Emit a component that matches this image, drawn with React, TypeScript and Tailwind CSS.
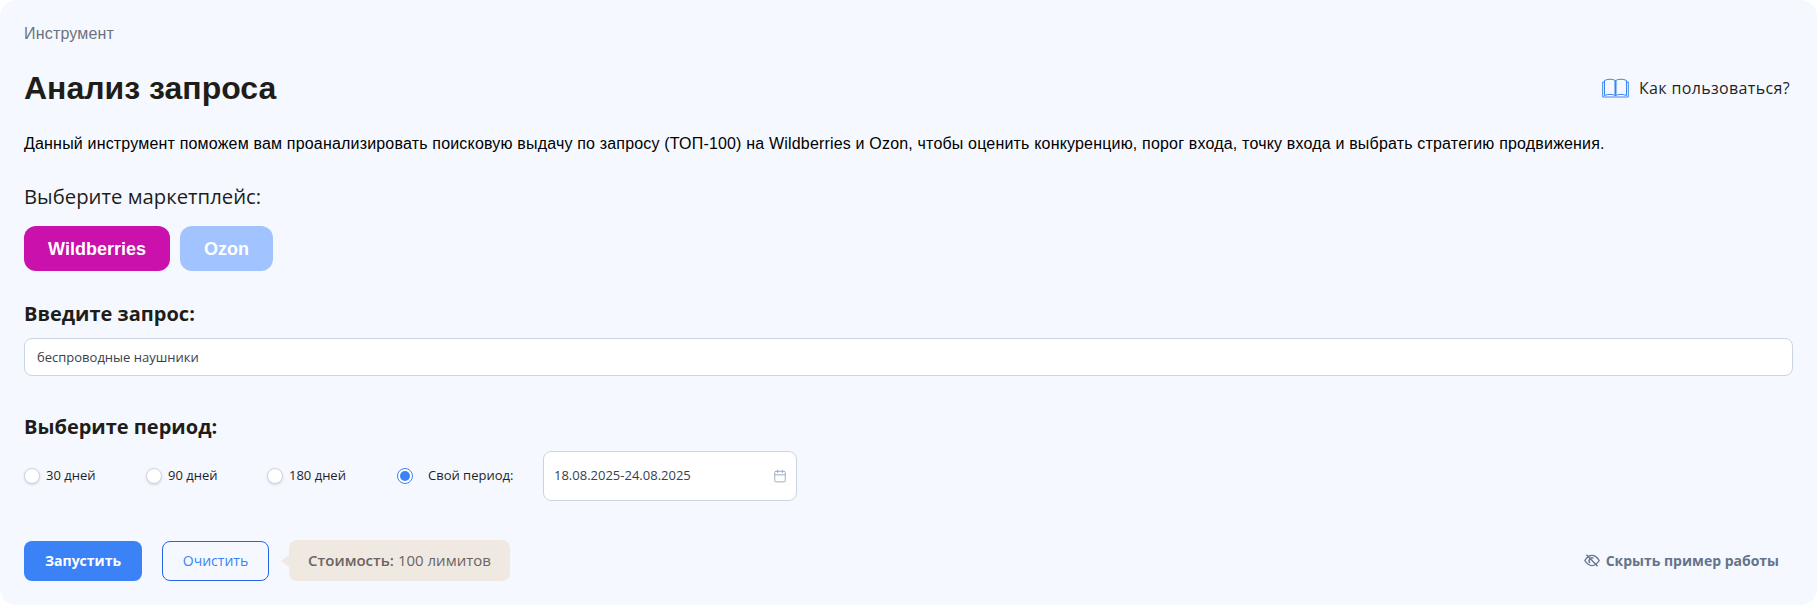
import { Calendar } from "lucide-react";

const sans = "font-['Liberation_Sans',Arial,sans-serif]";
const open = "font-['Open_Sans',sans-serif]";

function Radio({ label, checked, className }: { label: string; checked?: boolean; className: string }) {
  return (
    <label className={`flex items-center ${className}`}>
      {checked ? (
        <span className="flex h-4 w-4 items-center justify-center rounded-full border border-[#3b82f6] bg-white">
          <span className="h-[10px] w-[10px] rounded-full bg-[#3b82f6]" />
        </span>
      ) : (
        <span className="h-4 w-4 rounded-full border border-[#cbd5e1] bg-white shadow-sm" />
      )}
      <span className={`text-[13px] text-[#1f1f1f] ${checked ? "ml-[15px]" : "ml-1.5"}`}>{label}</span>
    </label>
  );
}

function BookIcon() {
  return (
    <svg width="27" height="20" viewBox="0 0 27 20" fill="none" stroke="#3b82f6" strokeWidth="1">
      <path d="M2.5 2.5C6 .8 10 .8 13.5 2.5V17.5C10 16 6 16 2.5 17.5Z" />
      <path d="M24.5 2.5C21 .8 17 .8 13.5 2.5V17.5C17 16 21 16 24.5 17.5Z" />
      <path d="M2.5 4H.7V19H26.3V4H24.5" />
      <path d="M12.5 3V17M14.5 3V17" stroke="#93bbfb" />
    </svg>
  );
}

function HideIcon() {
  return (
    <svg width="16" height="13" viewBox="0 0 16 13" fill="none" stroke="#64748b" strokeWidth="1.4">
      <path d="M.8 6.5C3 3 5.3 1.4 8 1.4S13 3 15.2 6.5C13 10 10.7 11.6 8 11.6S3 10 .8 6.5Z" />
      <path d="M6 9A3 3 0 0 1 9.5 4.2" />
      <path d="M2.5 .8 13.5 12.2" />
    </svg>
  );
}

export default function App() {
  return (
    <div className={`h-[605px] w-[1817px] bg-white ${open}`}>
      <div className="flex h-full flex-col rounded-2xl bg-[#f5f9ff] px-6 pt-[24px]">
        <p className={`${sans} text-base tracking-[0.18px] leading-[20px] text-[#6b7280]`}>Инструмент</p>

        <div className="mt-[22px] flex items-center justify-between">
          <h1 className={`${sans} text-[32px] font-bold leading-[44px] text-[#1f1d1a]`}>Анализ запроса</h1>
          <a className="mr-[3px] flex items-center gap-2.5 text-base font-medium tracking-[0.35px] text-[#1f1f1f]">
            <BookIcon />
            Как пользоваться?
          </a>
        </div>

        <p className={`${sans} mt-[24px] text-base tracking-[0.18px] leading-[20px] text-black`}>
          Данный инструмент поможем вам проанализировать поисковую выдачу по запросу (ТОП-100) на Wildberries и Ozon,
          чтобы оценить конкуренцию, порог входа, точку входа и выбрать стратегию продвижения.
        </p>

        <h2 className="mt-[29px] text-[20.3px] font-medium leading-[26px] text-[#1f1d1a]">Выберите маркетплейс:</h2>
        <div className={`${sans} mt-[17px] flex gap-[10px]`}>
          <button className="h-[45px] w-[146px] rounded-xl bg-[#cb11ab] text-lg font-bold text-white">Wildberries</button>
          <button className="h-[45px] w-[93px] rounded-xl bg-[#a1c3ff] text-lg font-bold text-white">Ozon</button>
        </div>

        <h2 className="mt-[30px] text-[20px] font-bold leading-[26px] text-[#1f1d1a]">Введите запрос:</h2>
        <input
          readOnly
          value="беспроводные наушники"
          className="mt-[11px] h-[38px] w-full rounded-lg border border-[#cbd5e1] bg-white px-[12px] text-[13px] text-[#374151] outline-none"
        />

        <h2 className="mt-[38px] text-[20px] font-bold leading-[26px] text-[#1f1d1a]">Выберите период:</h2>
        <div className="mt-[11px] flex items-center">
          <Radio label="30 дней" className="w-[122px]" />
          <Radio label="90 дней" className="w-[121px]" />
          <Radio label="180 дней" className="w-[130px]" />
          <Radio label="Свой период:" checked className="w-[146px]" />
          <div className="flex h-[50px] w-[254px] items-center justify-between rounded-lg border border-[#cbd5e1] bg-white pl-[10px] pr-[9px]">
            <span className="text-[13px] text-[#374151]">18.08.2025-24.08.2025</span>
            <Calendar className="h-[14px] w-[14px] text-[#94a3b8]" strokeWidth={1.5} />
          </div>
        </div>

        <div className="mt-[39px] flex items-center">
          <button className="h-10 w-[118px] rounded-lg bg-[#3b82f6] text-sm font-bold text-white">Запустить</button>
          <button className="ml-5 h-10 w-[107px] rounded-lg border border-[#2563eb] text-sm text-[#3b82f6]">Очистить</button>
          <div className="relative ml-5 flex h-[41px] w-[221px] items-center justify-center rounded-lg bg-[#f0e9e2] text-[15px] text-[#6b6460]">
            <span className="absolute -left-2 top-1/2 h-0 w-0 -translate-y-1/2 border-y-[6px] border-r-[8px] border-y-transparent border-r-[#f0e9e2]" />
            <span className="mr-1 font-semibold">Стоимость:</span> 100 лимитов
          </div>
          <a className="ml-auto mr-[14px] flex items-center gap-1.5 text-sm font-bold text-[#64748b]">
            <HideIcon />
            Скрыть пример работы
          </a>
        </div>
      </div>
    </div>
  );
}
